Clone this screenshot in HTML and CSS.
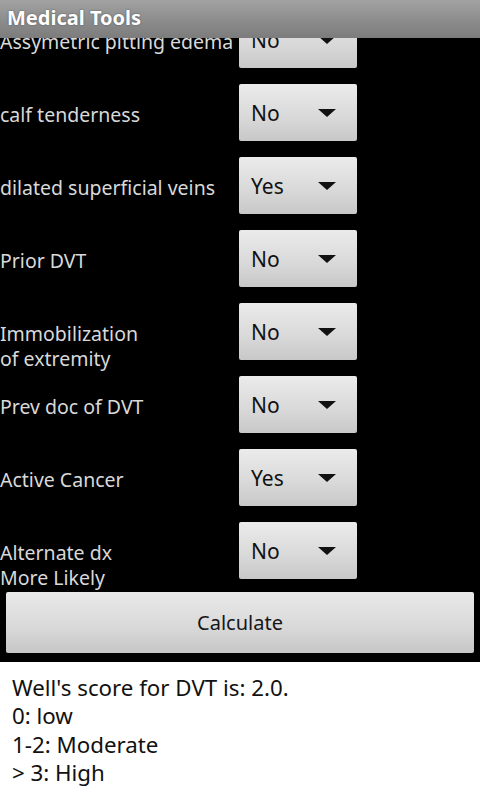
FILE: index.html
```html
<!DOCTYPE html>
<html lang="en-us">
<head>
  <meta name="viewport" content="width=device-width,initial-scale=1.0">
  <title>Medical Tools</title>
  <link rel="stylesheet" href="styles.css">
</head>
<body>
  <div class="titlebar">Medical Tools</div>
  <div class="scroller">
    <div class="form">
      <div class="row">
        <div class="label">Assymetric pitting edema</div>
        <div class="spinner"><span>No</span><i class="arrow"></i></div>
      </div>
      <div class="row">
        <div class="label">calf tenderness</div>
        <div class="spinner"><span>No</span><i class="arrow"></i></div>
      </div>
      <div class="row">
        <div class="label">dilated superficial veins</div>
        <div class="spinner"><span>Yes</span><i class="arrow"></i></div>
      </div>
      <div class="row">
        <div class="label">Prior DVT</div>
        <div class="spinner"><span>No</span><i class="arrow"></i></div>
      </div>
      <div class="row">
        <div class="label">Immobilization<br>of extremity</div>
        <div class="spinner"><span>No</span><i class="arrow"></i></div>
      </div>
      <div class="row">
        <div class="label">Prev doc of DVT</div>
        <div class="spinner"><span>No</span><i class="arrow"></i></div>
      </div>
      <div class="row">
        <div class="label">Active Cancer</div>
        <div class="spinner"><span>Yes</span><i class="arrow"></i></div>
      </div>
      <div class="row">
        <div class="label">Alternate dx<br>More Likely</div>
        <div class="spinner"><span>No</span><i class="arrow"></i></div>
      </div>
      <button class="calc">Calculate</button>
    </div>
  </div>
  <div class="result">
    Well's score for DVT is: 2.0.<br>
    0: low<br>
    1-2: Moderate<br>
    &gt; 3: High
  </div>
</body>
</html>
```

FILE: styles.css
```css
html, body {
  margin: 0;
  padding: 0;
  height: 800px;
  overflow: hidden;
}
body {
  background: #000;
  font-family: "Noto Sans", "Open Sans", sans-serif;
  display: flex;
  flex-direction: column;
}
.titlebar {
  height: 38px;
  line-height: 36px;
  padding-left: 7px;
  color: #fff;
  font-weight: bold;
  font-size: 20px;
  background: linear-gradient(#a2a2a2, #8a8a8a 60%, #7c7c7c);
  text-shadow: 0 0 2px #555;
  position: relative;
  z-index: 2;
}
.scroller {
  height: 624px;
  overflow: hidden;
}
.form {
  margin-top: -35px;
  display: flex;
  flex-direction: column;
}
.row {
  height: 73px;
  display: flex;
}
.label {
  width: 239px;
  color: #d9d9d9;
  font-size: 19.5px;
  line-height: 25px;
  padding-top: 26px;
  white-space: nowrap;
}
.spinner {
  width: 118px;
  height: 57px;
  margin-top: 8px;
  box-sizing: border-box;
  background: linear-gradient(#ebebeb, #dadada 55%, #c8c8c8);
  border-radius: 2px;
  display: flex;
  align-items: center;
  justify-content: space-between;
  padding: 0 21px 0 12px;
  color: #111;
  font-size: 21px;
}
.arrow {
  width: 0;
  height: 0;
  border-left: 9px solid transparent;
  border-right: 9px solid transparent;
  border-top: 8px solid #111;
}
.calc {
  margin: 5px 6px 0;
  height: 61px;
  border: none;
  border-radius: 2px;
  background: linear-gradient(#eaeaea, #d8d8d8 60%, #c6c6c6);
  color: #161616;
  font-family: "Noto Sans", "Open Sans", sans-serif;
  font-size: 20px;
}
.result {
  flex: 1;
  background: #fff;
  color: #111;
  font-size: 22.3px;
  line-height: 28.3px;
  padding: 12px 12px 0;
}
```
